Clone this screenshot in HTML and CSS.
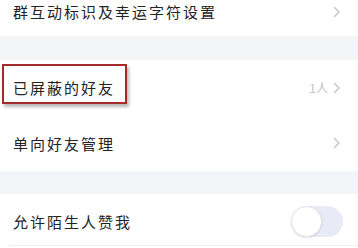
FILE: index.html
```html
<!DOCTYPE html>
<html lang="zh">
<head>
<meta charset="utf-8">
<link rel="stylesheet" href="styles.css">
</head>
<body>
<div class="page">
  <div class="row row-top">
    <span class="label">群互动标识及幸运字符设置</span>
    <span class="chev"><svg width="8" height="12" viewBox="0 0 8 12"><path d="M1.5 1.5 L6 6 L1.5 10.5" fill="none" stroke="#c8c8cc" stroke-width="1.6" stroke-linecap="round" stroke-linejoin="round"/></svg></span>
  </div>
  <div class="gap gap1"></div>
  <div class="row row-blocked">
    <span class="label">已屏蔽的好友</span>
    <span class="meta">1人</span>
    <span class="chev"><svg width="8" height="12" viewBox="0 0 8 12"><path d="M1.5 1.5 L6 6 L1.5 10.5" fill="none" stroke="#c8c8cc" stroke-width="1.6" stroke-linecap="round" stroke-linejoin="round"/></svg></span>
    <div class="highlight"></div>
  </div>
  <div class="row">
    <span class="label">单向好友管理</span>
    <span class="chev"><svg width="8" height="12" viewBox="0 0 8 12"><path d="M1.5 1.5 L6 6 L1.5 10.5" fill="none" stroke="#c8c8cc" stroke-width="1.6" stroke-linecap="round" stroke-linejoin="round"/></svg></span>
  </div>
  <div class="gap gap2"></div>
  <div class="row row-last">
    <span class="label">允许陌生人赞我</span>
    <span class="toggle"><span class="knob"></span></span>
  </div>
  <div class="line"></div>
</div>
</body>
</html>
```
FILE: styles.css
```css
html, body {
  margin: 0;
  padding: 0;
  background: #ffffff;
}
.page {
  width: 358px;
  height: 248px;
  overflow: hidden;
  display: flex;
  flex-direction: column;
  font-family: "Noto Sans CJK SC", "Noto Sans", sans-serif;
}
.row {
  position: relative;
  display: flex;
  align-items: center;
  height: 56px;
  padding: 0 17px 0 13px;
  background: #fff;
  flex-shrink: 0;
}
.row-top {
  height: 36px;
  padding-bottom: 13px;
  box-sizing: border-box;
}
.row-blocked {
  height: 55px;
}
.row-last {
  height: 51px;
  padding-top: 4px;
  box-sizing: border-box;
}
.label {
  flex: 1;
  font-size: 15px;
  letter-spacing: 2px;
  color: #232326;
  font-weight: 400;
}
.meta {
  font-size: 12px;
  color: #c2c2c6;
  margin-right: 5px;
}
.chev {
  display: flex;
  align-items: center;
}
.gap {
  background: #f4f5f9;
  flex-shrink: 0;
}
.gap1 { height: 24px; }
.gap2 { height: 23px; }
.highlight {
  position: absolute;
  left: 2px;
  top: 4px;
  width: 121px;
  height: 36px;
  border: 2px solid #a52a2c;
  box-shadow: 2px 3px 3px rgba(0, 0, 0, 0.28);
}
.toggle {
  width: 52px;
  height: 31px;
  border-radius: 16px;
  background: #e8eaf5;
  position: relative;
  margin-right: -2px;
}
.knob {
  position: absolute;
  left: 0;
  top: 0;
  width: 31px;
  height: 31px;
  box-sizing: border-box;
  border-radius: 50%;
  background: #fff;
  border: 1px solid #e6e6ea;
  box-shadow: 0 1px 2px rgba(0, 0, 0, 0.1);
}
.line {
  height: 1px;
  margin-left: 10px;
  background: #efeff3;
}
```
